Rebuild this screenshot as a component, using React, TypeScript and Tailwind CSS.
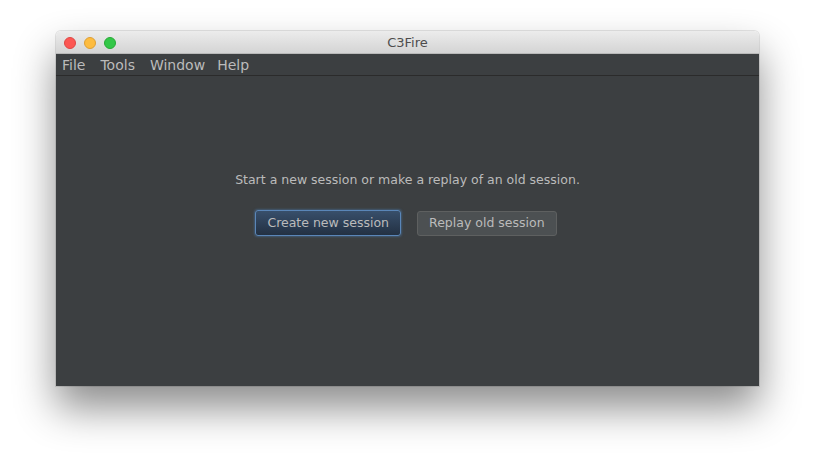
import React from 'react'

const App = () => {
  return (
    <div className="w-[815px] h-[466px] bg-white pl-[56px] pt-[31px]" style={{ fontFamily: '"DejaVu Sans", sans-serif' }}>
      <div className="w-[703px] h-[355px] flex flex-col rounded-t-[5px] overflow-hidden shadow-[0_22px_40px_rgba(0,0,0,0.45)] ring-1 ring-black/10">
        <div className="relative h-[23px] flex items-center justify-center pt-[2px] bg-gradient-to-b from-[#ececec] to-[#d4d4d4] border-b border-[#b9b9b9]">
          <div className="absolute left-[8px] top-[6px] flex gap-[8px]">
            <span className="w-[12px] h-[12px] rounded-full bg-[#fc5753] border border-[#df4744]" />
            <span className="w-[12px] h-[12px] rounded-full bg-[#fdbc40] border border-[#de9f34]" />
            <span className="w-[12px] h-[12px] rounded-full bg-[#33c748] border border-[#27aa35]" />
          </div>
          <span className="text-[13px] text-[#4d4d4d]">C3Fire</span>
        </div>
        <div className="h-[22px] flex items-center gap-[14px] pl-[6px] pt-[2px] bg-[#3c3f41] border-b border-[#2b2b2b] text-[14px] text-[#bbbbbb]">
          <span>File</span>
          <span className="ml-[1px]">Tools</span>
          <span className="ml-[1px]">Window</span>
          <span className="ml-[-2px]">Help</span>
        </div>
        <div className="flex-1 bg-[#3c3f41] flex flex-col items-center pt-[95px]">
          <p className="text-[12.5px] text-[#bbbbbb]">Start a new session or make a replay of an old session.</p>
          <div className="flex gap-[16px] mt-[20px] ml-[-3px]">
            <button className="h-[26px] px-[11px] pt-[1px] rounded-[3px] bg-gradient-to-b from-[#384f6b] to-[#233143] border border-[#5a86b8] shadow-[0_0_2px_1px_rgba(70,109,148,0.6)] text-[12.5px] text-[#bbbbbb]">Create new session</button>
            <button className="h-[25px] mt-[1px] px-[11px] pt-[1px] rounded-[3px] bg-[#4c5052] border border-[#5e6060] text-[12.5px] text-[#bbbbbb]">Replay old session</button>
          </div>
        </div>
      </div>
    </div>
  )
}

export default App
